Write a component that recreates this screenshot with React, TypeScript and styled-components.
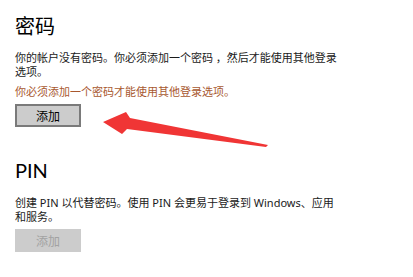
import React from "react"
import styled, { createGlobalStyle } from "styled-components"

const GlobalStyle = createGlobalStyle`
  html, body {
    margin: 0;
    padding: 0;
    background: #ffffff;
  }
  body {
    font-family: "Noto Sans", "Noto Sans CJK SC", sans-serif;
    color: #000;
  }
`

const App = () => {
  return (
    <Page>
      <GlobalStyle />
      <Section>
        <Heading>密码</Heading>
        <Body>
          你的帐户没有密码。你必须添加一个密码 ，然后才能使用其他登录
          <br />
          选项。
        </Body>
        <Warning>你必须添加一个密码才能使用其他登录选项。</Warning>
        <Button>添加</Button>
      </Section>
      <Section $gap={29}>
        <Heading>PIN</Heading>
        <Body $top={12}>
          创建 PIN 以代替密码。使用 PIN 会更易于登录到 Windows、应用
          <br />
          和服务。
        </Body>
        <Button disabled>添加</Button>
      </Section>
      <Arrow viewBox="0 0 413 277" aria-hidden="true">
        <polygon
          points="103,122 126,112 130,118 268,145 266,147 127,129 122,134"
          fill="#f03535"
        />
      </Arrow>
    </Page>
  )
}

export default App

const Page = styled.div`
  position: relative;
  width: 413px;
  height: 277px;
  overflow: hidden;
  padding: 12px 0 0 15px;
  box-sizing: border-box;
  background: #fff;
`

const Section = styled.section<{ $gap?: number }>`
  display: flex;
  flex-direction: column;
  align-items: flex-start;
  margin-top: ${props => props.$gap || 0}px;
`

const Heading = styled.h2`
  margin: 0;
  font-family: Lato, "Noto Sans CJK SC", sans-serif;
  font-size: 20px;
  font-weight: 400;
  line-height: 28px;
  color: #000;
`

const Body = styled.p<{ $top?: number }>`
  margin: ${props => props.$top || 11}px 0 0;
  white-space: nowrap;
  font-size: 11px;
  line-height: 14px;
  color: #1a1a1a;
`

const Warning = styled.p`
  margin: 6px 0 0;
  font-size: 11px;
  line-height: 14px;
  color: #a8582f;
`

const Button = styled.button`
  margin-top: 5px;
  width: 66px;
  height: 23px;
  padding: 0;
  box-sizing: border-box;
  border: 2px solid #7a7a7a;
  background: #cccccc;
  font-family: "Noto Sans CJK SC", sans-serif;
  font-size: 12px;
  color: #000;

  &:disabled {
    border-color: #cccccc;
    color: #a2a2a2;
  }
`

const Arrow = styled.svg`
  position: absolute;
  left: 0;
  top: 0;
  width: 413px;
  height: 277px;
  pointer-events: none;
`
